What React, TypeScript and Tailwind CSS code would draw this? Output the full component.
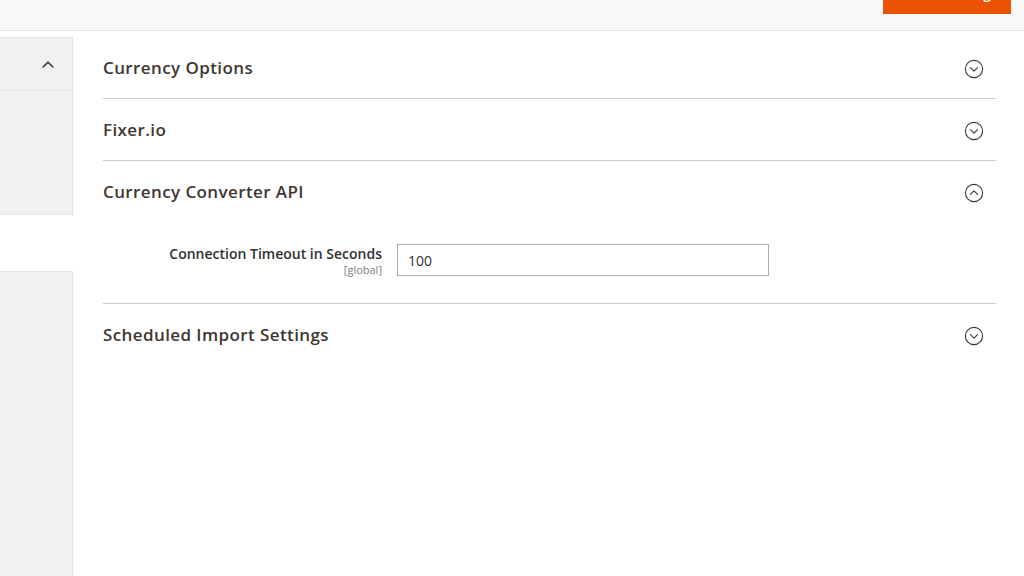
import React from "react";

const font = { fontFamily: '"Open Sans", "Noto Sans", sans-serif' };

function CircleChevron({ up = false }: { up?: boolean }) {
  return (
    <svg width="20" height="20" viewBox="0 0 20 20" fill="none" className="mt-[2px]">
      <circle cx="10" cy="10" r="8.6" stroke="#41362f" strokeWidth="1.1" />
      {up ? (
        <path d="M6.4 11.4 L10 7.9 L13.6 11.4" stroke="#41362f" strokeWidth="1.1" strokeLinecap="round" strokeLinejoin="round" />
      ) : (
        <path d="M6.4 8.6 L10 12.1 L13.6 8.6" stroke="#41362f" strokeWidth="1.1" strokeLinecap="round" strokeLinejoin="round" />
      )}
    </svg>
  );
}

function SectionHeader({ title, open = false }: { title: string; open?: boolean }) {
  return (
    <div className="flex h-[61px] items-center justify-between pr-[12px]">
      <span className="text-[17px] font-semibold tracking-[0.4px] text-[#41362f]">{title}</span>
      <CircleChevron up={open} />
    </div>
  );
}

export default function App() {
  return (
    <div className="min-h-[576px] w-[1024px] overflow-hidden bg-white" style={font}>
      <div className="flex h-[31px] justify-end border-b border-[#e3e3e3] bg-[#f8f8f8] pr-[13px]">
        <div className="h-[14px] w-[128px] overflow-hidden bg-[#eb5202] pr-[20px] text-right text-[14px] font-semibold text-white">
          <div className="mt-[-14px] leading-[16px]">Save Config</div>
        </div>
      </div>
      <div className="flex">
        <div className="w-[73px] shrink-0 pt-[6px]">
          <div className="h-[178px] border border-l-0 border-[#e3e3e3] bg-[#f1f1f1]">
            <div className="flex h-[53px] items-center justify-end border-b border-[#e3e3e3] pr-[17px] pt-[2px]">
              <svg width="14" height="10" viewBox="0 0 14 10" fill="none">
                <path d="M2 7 L7 2.2 L12 7" stroke="#303030" strokeWidth="1.5" strokeLinecap="round" />
              </svg>
            </div>
          </div>
          <div className="mt-[56px] h-[320px] border border-l-0 border-b-0 border-[#e3e3e3] bg-[#f1f1f1]" />
        </div>
        <div className="ml-[30px] w-[893px] pt-[6px]">
          <div className="border-b border-[#cccccc]">
            <SectionHeader title="Currency Options" />
          </div>
          <div className="border-b border-[#cccccc]">
            <SectionHeader title="Fixer.io" />
          </div>
          <div className="border-b border-[#cccccc]">
            <SectionHeader title="Currency Converter API" open />
            <div className="flex items-start pb-[26px] pt-[22px]">
              <div className="w-[279px] pt-[1px] text-right">
                <div className="text-[14px] font-semibold leading-[18px] text-[#303030]">Connection Timeout in Seconds</div>
                <div className="text-[11px] leading-[14px] text-[#808080]">[global]</div>
              </div>
              <input
                className="ml-[15px] h-[32px] w-[372px] border border-[#adadad] px-[10px] text-[14px] text-[#303030] outline-none"
                defaultValue="100"
                style={font}
              />
            </div>
          </div>
          <div>
            <SectionHeader title="Scheduled Import Settings" />
          </div>
        </div>
      </div>
    </div>
  );
}
